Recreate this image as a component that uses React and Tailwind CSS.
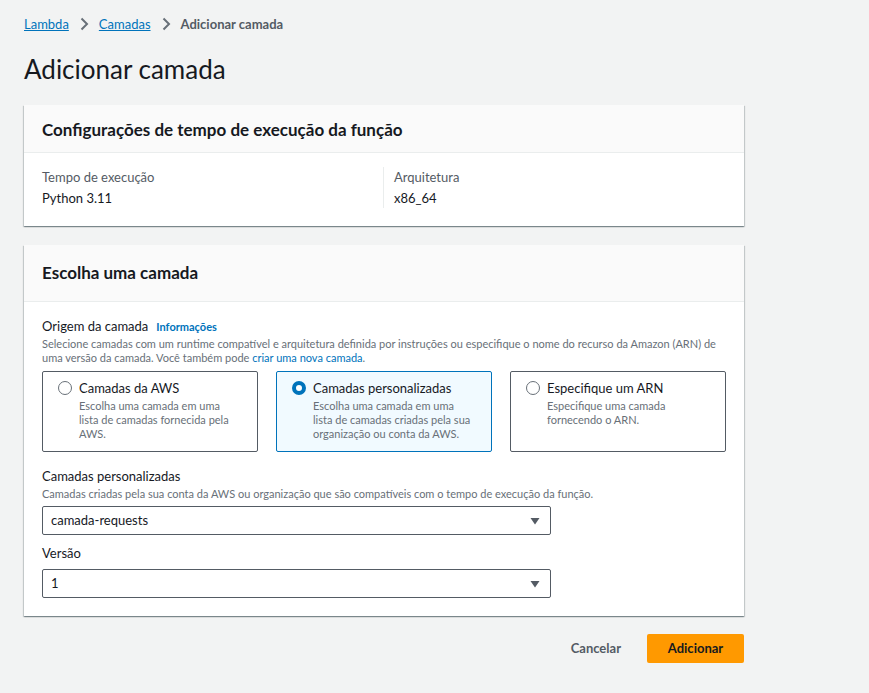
import React from 'react';

const font = { fontFamily: 'Lato, "Noto Sans", sans-serif' };

function Chevron() {
  return (
    <svg width="16" height="16" viewBox="0 0 16 16" className="mx-[7px] text-[#687078]">
      <path d="M5.5 2.5 11 8l-5.5 5.5" fill="none" stroke="currentColor" strokeWidth="2" />
    </svg>
  );
}

function Caret() {
  return (
    <svg width="12" height="12" viewBox="0 0 12 12" className="text-[#545b64]">
      <path d="M1.5 3h9L6 9.5z" fill="currentColor" />
    </svg>
  );
}

function Radio({ checked }) {
  return checked ? (
    <span className="mt-[3px] w-[14px] h-[14px] rounded-full border-[4px] border-[#0073bb] bg-white shrink-0" />
  ) : (
    <span className="mt-[3px] w-[14px] h-[14px] rounded-full border border-[#687078] bg-white shrink-0" />
  );
}

function Tile({ title, lines, checked }) {
  return (
    <div
      className={`flex gap-[7px] h-[81px] pl-[15px] pr-3 pt-[6px] rounded-[2px] border ${
        checked ? 'border-[#0073bb] bg-[#f1faff]' : 'border-[#545b64] bg-white'
      }`}
    >
      <Radio checked={checked} />
      <div>
        <div className="text-[13px] leading-[20px] text-[#16191f]">{title}</div>
        <div className="text-[11px] leading-[14px] text-[#687078] mt-[1px]">
          {lines.map((l, i) => (
            <div key={i}>{l}</div>
          ))}
        </div>
      </div>
    </div>
  );
}

function Select({ value }) {
  return (
    <div className="w-[509px] h-[29px] border border-[#545b64] rounded-[2px] bg-white flex items-center justify-between pl-[8px] pr-[9px] text-[13px] text-[#16191f]">
      <span>{value}</span>
      <Caret />
    </div>
  );
}

const card = 'bg-white shadow-[0_1px_1px_0_rgba(0,28,36,0.3),1px_1px_1px_0_rgba(0,28,36,0.15),-1px_1px_1px_0_rgba(0,28,36,0.15)]';

export default function App() {
  return (
    <div className="min-h-screen bg-[#f2f3f3] pl-6 pt-[14px]" style={font}>
      <nav className="flex items-center text-[13px] leading-[20px] h-[20px]">
        <a className="text-[#0073bb] underline">Lambda</a>
        <Chevron />
        <a className="text-[#0073bb] underline">Camadas</a>
        <Chevron />
        <span className="font-bold text-[#545b64]">Adicionar camada</span>
      </nav>

      <h1 className="mt-[18px] text-[26px] leading-[34px] text-[#16191f]">Adicionar camada</h1>

      <div className="w-[720px]">
        <section className={`${card} mt-[19px]`}>
          <div className="h-[48px] px-[18px] pt-[3px] flex items-center bg-[#fafafa] border-b border-[#eaeded]">
            <h2 className="text-[17px] font-bold text-[#16191f]">Configurações de tempo de execução da função</h2>
          </div>
          <div className="grid grid-cols-2 px-[18px] pt-[14px] pb-[18px]">
            <div className="pr-4">
              <div className="text-[13px] leading-[20px] text-[#545b64]">Tempo de execução</div>
              <div className="text-[13px] leading-[20px] text-[#16191f] mt-[1px]">Python 3.11</div>
            </div>
            <div className="border-l border-[#eaeded] pl-[10px] -ml-[1px]">
              <div className="text-[13px] leading-[20px] text-[#545b64]">Arquitetura</div>
              <div className="text-[13px] leading-[20px] text-[#16191f] mt-[1px]">x86_64</div>
            </div>
          </div>
        </section>

        <section className={`${card} mt-[19px]`}>
          <div className="h-[57px] px-[18px] flex items-center bg-[#fafafa] border-b border-[#eaeded]">
            <h2 className="text-[17px] font-bold text-[#16191f]">Escolha uma camada</h2>
          </div>
          <div className="px-[18px] pt-[14px] pb-[18px]">
            <div className="flex items-baseline gap-[8px] leading-[20px]">
              <span className="text-[13px] text-[#16191f]">Origem da camada</span>
              <span className="text-[11px] font-bold text-[#0073bb]">Informações</span>
            </div>
            <p className="text-[11px] leading-[14px] text-[#687078]">
              Selecione camadas com um runtime compatível e arquitetura definida por instruções ou especifique o nome do recurso da Amazon (ARN) de
              <br />
              uma versão da camada. Você também pode <span className="text-[#0073bb]">criar uma nova camada</span>.
            </p>
            <div className="grid grid-cols-3 gap-[18px] mt-[6px]">
              <Tile title="Camadas da AWS" lines={['Escolha uma camada em uma', 'lista de camadas fornecida pela', 'AWS.']} />
              <Tile checked title="Camadas personalizadas" lines={['Escolha uma camada em uma', 'lista de camadas criadas pela sua', 'organização ou conta da AWS.']} />
              <Tile title="Especifique um ARN" lines={['Especifique uma camada', 'fornecendo o ARN.']} />
            </div>

            <div className="mt-[14px] text-[13px] leading-[20px] text-[#16191f]">Camadas personalizadas</div>
            <p className="text-[11px] leading-[16px] text-[#687078]">Camadas criadas pela sua conta da AWS ou organização que são compatíveis com o tempo de execução da função.</p>
            <div className="mt-[4px]"><Select value="camada-requests" /></div>

            <div className="mt-[8px] text-[13px] leading-[20px] text-[#16191f]">Versão</div>
            <div className="mt-[6px]"><Select value="1" /></div>
          </div>
        </section>

        <div className="flex justify-end items-center gap-[26px] mt-[18px]">
          <button className="text-[13px] font-bold text-[#545b64]">Cancelar</button>
          <button className="h-[29px] w-[97px] bg-[#ff9900] rounded-[2px] text-[13px] font-bold text-[#16191f]">Adicionar</button>
        </div>
      </div>
    </div>
  );
}
